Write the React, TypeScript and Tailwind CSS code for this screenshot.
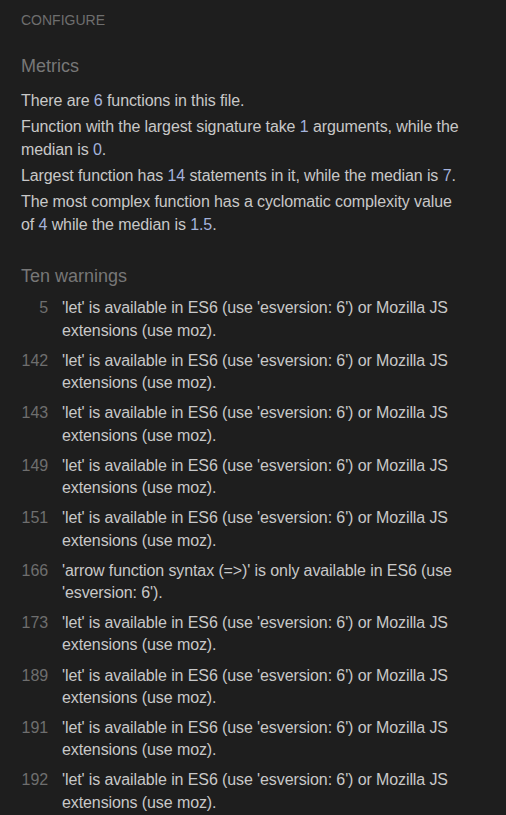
import React from 'react';

type Part = string | { n: string };

const metrics: Part[][] = [
  ['There are ', { n: '6' }, ' functions in this file.'],
  ['Function with the largest signature take ', { n: '1' }, ' arguments, while the median is ', { n: '0' }, '.'],
  ['Largest function has ', { n: '14' }, ' statements in it, while the median is ', { n: '7' }, '.'],
  ['The most complex function has a cyclomatic complexity value of ', { n: '4' }, ' while the median is ', { n: '1.5' }, '.'],
];

const LET = "'let' is available in ES6 (use 'esversion: 6') or Mozilla JS extensions (use moz).";

const warnings: Array<{ line: number; text: string }> = [
  { line: 5, text: LET },
  { line: 142, text: LET },
  { line: 143, text: LET },
  { line: 149, text: LET },
  { line: 151, text: LET },
  { line: 166, text: "'arrow function syntax (=>)' is only available in ES6 (use 'esversion: 6')." },
  { line: 173, text: LET },
  { line: 189, text: LET },
  { line: 191, text: LET },
  { line: 192, text: LET },
];

export default function App() {
  return (
    <div className="min-h-[815px] w-full bg-[#1e1e1e] pl-[21px] pr-[40px] pt-[10.5px] font-['Liberation_Sans',Arial,sans-serif] text-[16px] leading-[1.4] tracking-[-0.1px] text-[#c8c8c8]">
      <div className="text-[14px] tracking-normal text-[#6e6e6e]">CONFIGURE</div>

      <h2 className="mt-[24.4px] text-[18px] tracking-normal text-[#777777]">Metrics</h2>
      <div className="mt-[10.2px] flex flex-col gap-[4px]">
        {metrics.map((parts, i) => (
          <p key={i}>
            {parts.map((p, j) =>
              typeof p === 'string' ? (
                <span key={j}>{p}</span>
              ) : (
                <span key={j} className="text-[#a4b3dc]">
                  {p.n}
                </span>
              )
            )}
          </p>
        ))}
      </div>

      <h2 className="mt-[27.7px] text-[18px] tracking-normal text-[#777777]">Ten warnings</h2>
      <div className="mt-[8.2px] flex flex-col gap-[7.7px]">
        {warnings.map((w, i) => (
          <div key={i} className="flex">
            <div className="w-[27px] shrink-0 text-right text-[#6e6e6e]">{w.line}</div>
            <div className="ml-[14px]">{w.text}</div>
          </div>
        ))}
      </div>
    </div>
  );
}
